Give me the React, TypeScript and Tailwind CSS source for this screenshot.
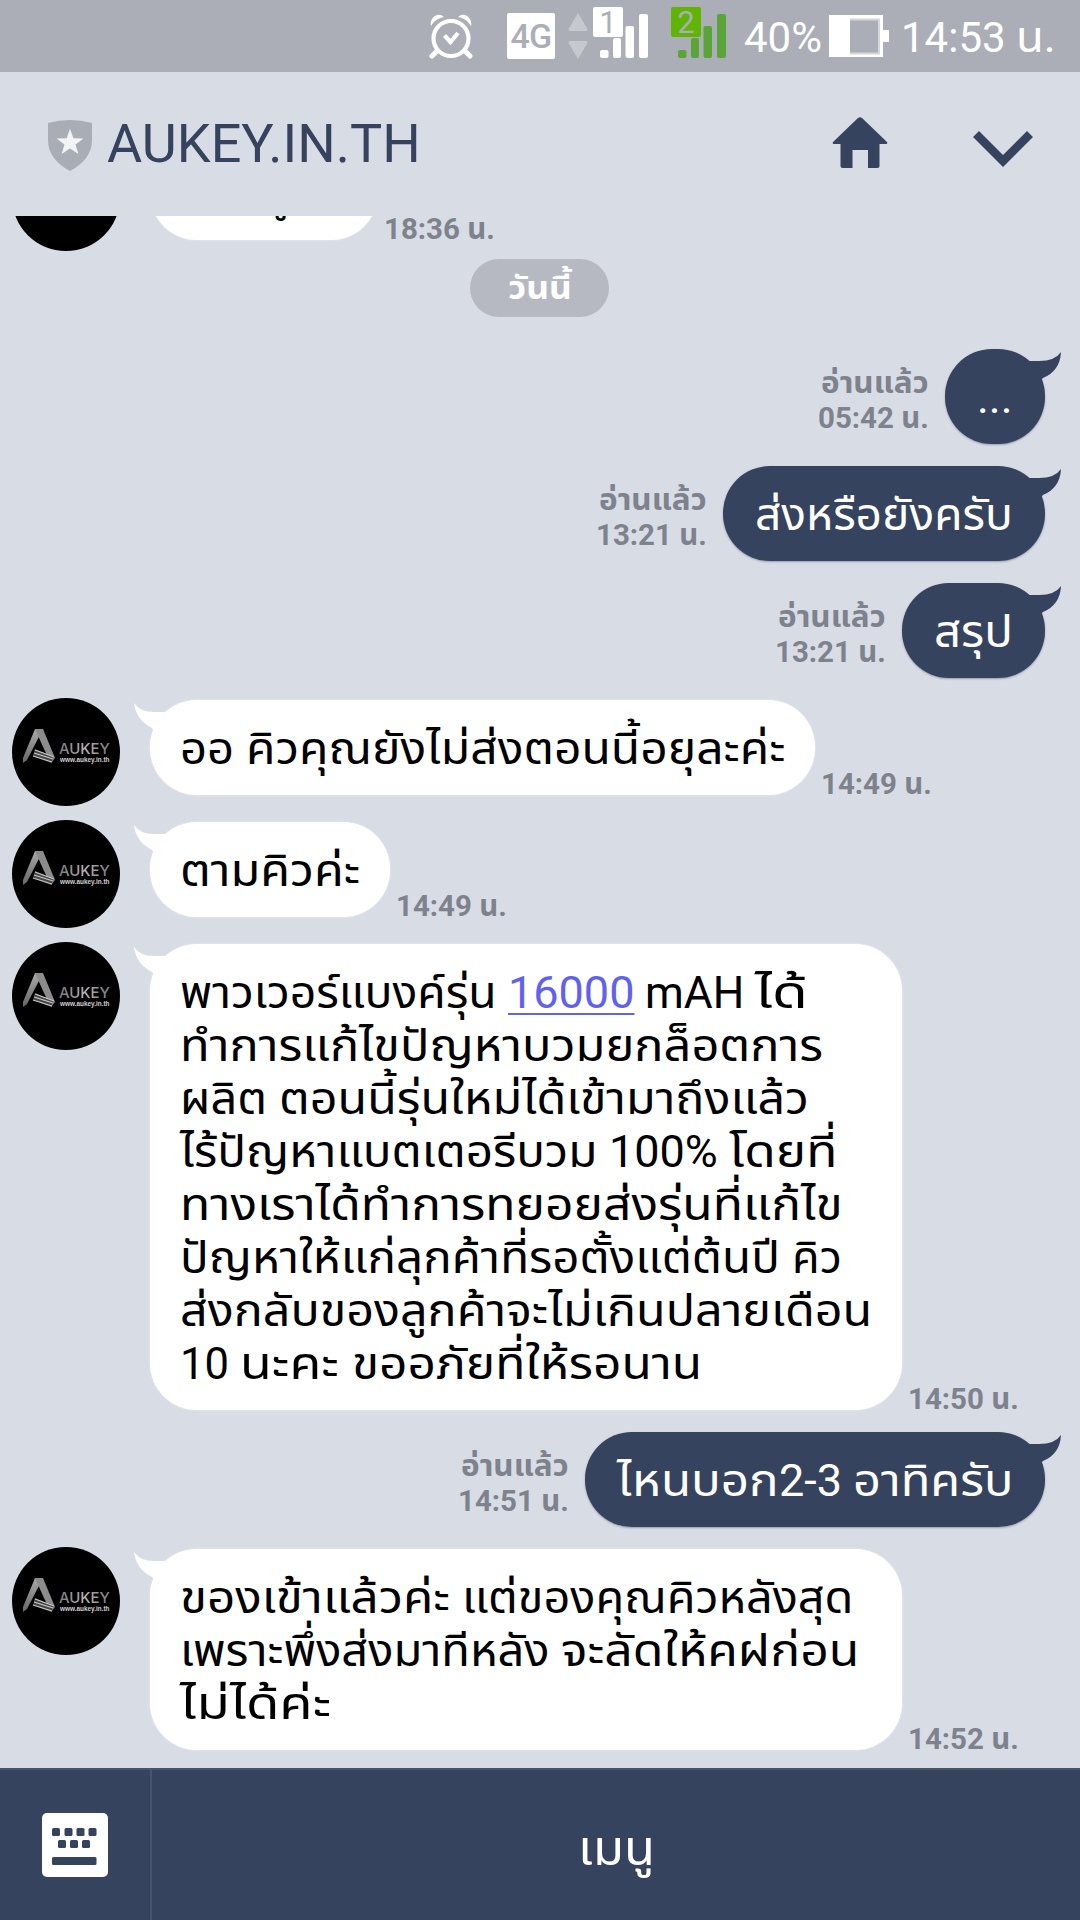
import { useLayoutEffect, useRef, useState } from "react"
import type { ReactNode } from "react"

const CHAT_FONT = "font-[Roboto,'Noto_Sans_Thai',sans-serif]"

function Fit({ width, children }: { width: number; children: ReactNode }) {
  const ref = useRef<HTMLSpanElement>(null)
  const [scale, setScale] = useState(1)

  useLayoutEffect(() => {
    const natural = ref.current?.offsetWidth ?? 0
    if (natural > 0) setScale(width / natural)
  }, [width])

  return (
    <span className="inline-block whitespace-pre text-left" style={{ width }}>
      <span ref={ref} className="inline-block origin-left" style={{ transform: `scaleX(${scale})` }}>
        {children}
      </span>
    </span>
  )
}

function AlarmIcon() {
  return (
    <svg width="44" height="46" viewBox="0 0 44 46" className="shrink-0" fill="none" stroke="#fff">
      <circle cx="22" cy="25.5" r="17.5" strokeWidth="4.200" />
      <path d="M15.500 22.500l6 6.500 7.500-9" strokeWidth="4.200" />
      <path d="M8 38l-5 5M36 38l5 5" strokeWidth="5" strokeLinecap="round" />
      <path d="M2 13C0 5 9-2 15 4 9 5 5 8 2 13zM42 13C44 5 35-2 29 4c6 1 10 4 13 9z" fill="#fff" stroke="none" />
    </svg>
  )
}

function SignalIcon({ sim, box, bars }: { sim: string; box: string; bars: string }) {
  return (
    <svg width="56" height="52" viewBox="0 0 56 52" className="shrink-0 overflow-visible">
      <rect width="30" height="30" rx="2" fill={box} />
      <text x="15" y="26" textAnchor="middle" fontFamily="Roboto" fontSize="31" fill="#abaeb7">
        {sim}
      </text>
      <g fill={bars}>
        <rect x="7" y="43" width="8.500" height="8" rx="2" />
        <rect x="20" y="31" width="8" height="20" rx="2" />
        <rect x="32.500" y="19" width="8.500" height="32" rx="2" />
        <rect x="46" y="7" width="9" height="44" rx="2" />
      </g>
    </svg>
  )
}

function StatusBar() {
  return (
    <div className="flex h-[72px] shrink-0 items-start bg-[#abaeb7] text-white">
      <div className="ml-[429px] mt-[13px]">
        <AlarmIcon />
      </div>
      <div className="ml-[34px] mt-[13px] flex h-[46px] w-[48px] items-center justify-center rounded-[2px] bg-white text-[34px] font-medium tracking-tight text-[#abaeb7]">
        4G
      </div>
      <svg width="20" height="46" viewBox="0 0 20 46" className="ml-[13px] mt-[13px] shrink-0" fill="#c5c8cd">
        <path d="M10 0l9.500 16q.5 2-1.500 2H2Q0 18 .5 16zM10 46l9.500-16q.5-2-1.500-2H2q-2 0-1.500 2z" />
      </svg>
      <div className="ml-[5px] mt-[7px]">
        <SignalIcon sim="1" box="#fff" bars="#fff" />
      </div>
      <div className="ml-[22px] mt-[7px]">
        <SignalIcon sim="2" box="#5fb404" bars="#5ba538" />
      </div>
      <div className="ml-[17px] mt-[13px] w-[80px] whitespace-nowrap text-[42px] leading-[50px]">40%</div>
      <svg width="60" height="42" viewBox="0 0 60 42" className="ml-[5px] mt-[15px] shrink-0">
        <path d="M0 0h54v15h6v12h-6v15H0zM21 4.500v34h29v-34z" fill="#fff" fillRule="evenodd" />
        <path d="M21 4.500h29v34H21" fill="none" stroke="#d5d7db" strokeWidth="2" />
      </svg>
      <div className="ml-[12px] mt-[13px] whitespace-nowrap text-[42px] leading-[50px]">
        14:53 <Fit width={40}>น.</Fit>
      </div>
    </div>
  )
}

function Header() {
  return (
    <header className="flex h-36 shrink-0 items-start text-[#36435e]">
      <svg width="44" height="51" viewBox="0 0 44 52" preserveAspectRatio="none" className="ml-12 mt-12 shrink-0">
        <path d="M0 3Q22-3 44 3v18c0 14-10 25-22 31C10 46 0 35 0 21z" fill="#a9adb5" />
        <path d="M22 9l3.400 9.600 10.100.2-8 6.200 2.900 9.700L22 29l-8.400 5.700 2.900-9.700-8-6.200 10.100-.2z" fill="#f2f3f5" />
      </svg>
      <h1 className="ml-[15px] mt-10 w-[725px] whitespace-nowrap text-[54px] leading-[64px]">AUKEY.IN.TH</h1>
      <svg width="56" height="52" viewBox="0 0 56 52" className="mt-[45px] shrink-0" fill="currentColor">
        <path d="M26 1q2-1.500 4 0l25 24q1 2-1 2h-6.500v22q0 2-2 2H36V33H20.500v18H10.500q-2 0-2-2V27H2q-2 0-1-2z" />
      </svg>
      <svg width="60" height="36" viewBox="0 0 60 36" className="ml-[85px] mt-[59px] shrink-0" fill="currentColor">
        <path d="M6 0l24 24L54 0l6 6-30 30L0 6z" />
      </svg>
    </header>
  )
}

function Avatar() {
  return (
    <svg width="108" height="108" viewBox="0 0 108 108" className="ml-3 mt-[9px] mb-[5px] shrink-0">
      <defs>
        <linearGradient id="leg" x1="0" y1="0" x2="0" y2="1">
          <stop offset="0" stopColor="#aaa" />
          <stop offset="1" stopColor="#666" />
        </linearGradient>
        <linearGradient id="word" x1="0" y1="0" x2="1" y2="0">
          <stop offset="0" stopColor="#777" />
          <stop offset=".5" stopColor="#b5b5b5" />
          <stop offset="1" stopColor="#777" />
        </linearGradient>
      </defs>
      <circle cx="54" cy="54" r="54" />
      <path d="M23 31h8L15 62l-4 3v-5z" fill="url(#leg)" />
      <path d="M23 31h8l12 29-4 5-7-14z" fill="#8c8c8c" />
      <path d="M23 51l19 8-3 6-18-7z" fill="#444" />
      <path d="M23 52l19 7M22 55l19 6M21 58l19 6" stroke="#c9c9c9" strokeWidth="1.300" />
      <text x="47" y="56" fontFamily="Inter" fontWeight="500" fontSize="15" textLength="51" lengthAdjust="spacingAndGlyphs" fill="url(#word)">
        AUKEY
      </text>
      <text x="48" y="64" fontFamily="'Liberation Sans'" fontWeight="700" fontSize="8" textLength="49.500" lengthAdjust="spacingAndGlyphs" fill="#d0d0d0">
        www.aukey.in.th
      </text>
    </svg>
  )
}

function Incoming({ time, children }: { time: string; children: ReactNode }) {
  return (
    <div className="flex shrink-0 items-start">
      <Avatar />
      <div className="my-[11px] ml-[30px] flex items-end">
        <div className="relative rounded-[47px] bg-white px-[30px] pb-5 pt-[22px] text-[45px] leading-[53px] text-black shadow-[0_0_2px_rgba(255,255,255,0.7)]">
          <svg width="34" height="28" viewBox="0 0 34 28" className="absolute -left-4 top-[3px]">
            <path d="M0 0q6 9 20 9h14L20 28l-2-3Q2 17 0 0z" fill="#fff" />
          </svg>
          {children}
        </div>
        <time className="-mb-1.5 ml-1.5 whitespace-nowrap text-[30px] font-bold leading-[35px] text-[#7e828d]">
          <Fit width={111}>{time}</Fit>
        </time>
      </div>
    </div>
  )
}

function Outgoing({ time, children }: { time: string; children: ReactNode }) {
  return (
    <div className="flex shrink-0 items-start justify-end py-[11px] pr-[35px]">
      <div className="mr-4 mt-4 whitespace-nowrap text-right text-[30px] font-bold leading-[35px] text-[#7e828d]">
        <div>
          <Fit width={108}>อ่านแล้ว</Fit>
        </div>
        <time>
          <Fit width={111}>{time}</Fit>
        </time>
      </div>
      <div className="relative rounded-[47px] bg-[#36435e] px-8 pb-5 pt-[22px] text-[45px] leading-[53px] text-white shadow-[0_1px_2px_rgba(54,67,94,0.4)]">
        <svg width="36" height="28" viewBox="0 0 36 28" className="absolute -right-4 top-[3px]">
          <path d="M36 0q-6 9-22 9H0l16 19 2-2Q35 19 36 0z" fill="#36435e" />
        </svg>
        {children}
      </div>
    </div>
  )
}

function Line({ width, children }: { width?: number; children: ReactNode }) {
  return <p className="h-[53px] whitespace-pre">{width ? <Fit width={width}>{children}</Fit> : children}</p>
}

function Footer() {
  return (
    <footer className="flex h-[152px] shrink-0 border-t-2 border-[#475470] bg-[#36435e]">
      <div className="flex w-[152px] justify-center border-r-2 border-[#475470] pt-[43px]">
        <svg width="66" height="66" viewBox="0 0 66 66">
          <rect width="66" height="64" rx="5" fill="#fff" />
          <g fill="#36435e">
            {[10, 22.5, 34.5, 46.5].map((x) => (
              <rect key={x} x={x} y="15" width="8" height="8" rx="1.500" />
            ))}
            {[16, 28, 40].map((x) => (
              <rect key={x} x={x} y="27" width="8" height="8" rx="1.500" />
            ))}
            <rect x="10" y="44" width="44.500" height="8" rx="1.500" />
          </g>
        </svg>
      </div>
      <div className="flex-1 pt-[51px] text-center text-[48px] leading-[56px] text-white">
        <Fit width={77}>เมนู</Fit>
      </div>
    </footer>
  )
}

export default function App() {
  return (
    <div className={`flex h-[1920px] w-[1080px] flex-col overflow-hidden bg-[#d8dce5] ${CHAT_FONT}`}>
      <StatusBar />
      <Header />
      <main className="flex min-h-0 flex-1 flex-col overflow-hidden">
        <div className="-mt-[82px]">
          <Incoming time="18:36 น.">
            <Line width={168}>ขอข้อมูลค่ะ</Line>
          </Incoming>
        </div>
        <div className="flex h-[82px] shrink-0 items-start justify-center pr-px pt-[3px]">
          <span className="h-[58px] w-[139px] rounded-full bg-[#b6b9c1] pt-2.5 text-center text-[32px] font-bold leading-[38px] text-white">
            <Fit width={64}>วันนี้</Fit>
          </span>
        </div>
        <Outgoing time="05:42 น.">
          <Line width={36}>...</Line>
        </Outgoing>
        <Outgoing time="13:21 น.">
          <Line width={258}>ส่งหรือยังครับ</Line>
        </Outgoing>
        <Outgoing time="13:21 น.">
          <Line width={79}>สรุป</Line>
        </Outgoing>
        <Incoming time="14:49 น.">
          <Line>
            <Fit width={66}>ออ </Fit>
            <Fit width={539}>คิวคุณยังไม่ส่งตอนนี้อยุละค่ะ</Fit>
          </Line>
        </Incoming>
        <Incoming time="14:49 น.">
          <Line width={180}>ตามคิวค่ะ</Line>
        </Incoming>
        <Incoming time="14:50 น.">
          <Line>
            <Fit width={328}>พาวเวอร์แบงค์รุ่น </Fit>
            <a className="text-[#6161f0] underline decoration-2 underline-offset-[5px]">16000</a>
            <Fit width={121}> mAH </Fit>
            <Fit width={53}>ได้</Fit>
          </Line>
          <Line width={643}>ทำการแก้ไขปัญหาบวมยกล็อตการ</Line>
          <Line>
            <Fit width={99}>ผลิต </Fit>
            <Fit width={530}>ตอนนี้รุ่นใหม่ได้เข้ามาถึงแล้ว</Fit>
          </Line>
          <Line>
            <Fit width={429}>ไร้ปัญหาแบตเตอรีบวม </Fit>
            <Fit width={120}>100% </Fit>
            <Fit width={108}>โดยที่</Fit>
          </Line>
          <Line width={663}>ทางเราได้ทำการทยอยส่งรุ่นที่แก้ไข</Line>
          <Line>
            <Fit width={612}>ปัญหาให้แก่ลุกค้าที่รอตั้งแต่ต้นปี </Fit>
            <Fit width={50}>คิว</Fit>
          </Line>
          <Line width={692}>ส่งกลับของลูกค้าจะไม่เกินปลายเดือน</Line>
          <Line>
            <Fit width={60}>10 </Fit>
            <Fit width={112}>นะคะ </Fit>
            <Fit width={350}>ขออภัยที่ให้รอนาน</Fit>
          </Line>
        </Incoming>
        <Outgoing time="14:51 น.">
          <Line>
            <Fit width={162}>ไหนบอก</Fit>
            <Fit width={74}>2-3 </Fit>
            <Fit width={160}>อาทิครับ</Fit>
          </Line>
        </Outgoing>
        <Incoming time="14:52 น.">
          <Line>
            <Fit width={282}>ของเข้าแล้วค่ะ </Fit>
            <Fit width={391}>แต่ของคุณคิวหลังสุด</Fit>
          </Line>
          <div className="w-[692px]">
            <Line>
              <Fit width={381}>เพราะพึ่งส่งมาทีหลัง </Fit>
              <Fit width={298}>จะลัดให้คฝก่อน</Fit>
            </Line>
          </div>
          <Line width={151}>ไม่ได้ค่ะ</Line>
        </Incoming>
      </main>
      <Footer />
    </div>
  )
}
